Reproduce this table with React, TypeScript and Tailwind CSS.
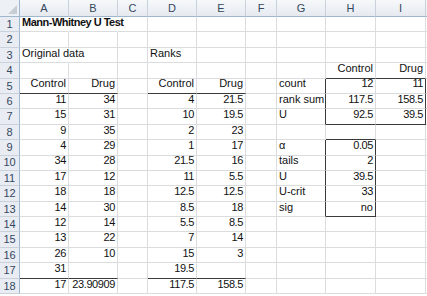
import React from "react";

type Cell = { v: string; left?: boolean; bold?: boolean; spill?: boolean };

const COLS = ["A", "B", "C", "D", "E", "F", "G", "H", "I"];

// row -> [A..I]
const DATA: Record<number, (string | Cell)[]> = {
  1: [{ v: "Mann-Whitney U Test", left: true, bold: true, spill: true }],
  3: [{ v: "Original data", left: true, spill: true }, "", "", { v: "Ranks", left: true }],
  4: ["", "", "", "", "", "", "", "Control", "Drug"],
  5: ["Control", "Drug", "", "Control", "Drug", "", { v: "count", left: true }, "12", "11"],
  6: ["11", "34", "", "4", "21.5", "", { v: "rank sum", left: true }, "117.5", "158.5"],
  7: ["15", "31", "", "10", "19.5", "", { v: "U", left: true }, "92.5", "39.5"],
  8: ["9", "35", "", "2", "23"],
  9: ["4", "29", "", "1", "17", "", { v: "α", left: true }, "0.05"],
  10: ["34", "28", "", "21.5", "16", "", { v: "tails", left: true }, "2"],
  11: ["17", "12", "", "11", "5.5", "", { v: "U", left: true }, "39.5"],
  12: ["18", "18", "", "12.5", "12.5", "", { v: "U-crit", left: true }, "33"],
  13: ["14", "30", "", "8.5", "18", "", { v: "sig", left: true }, "no"],
  14: ["12", "14", "", "5.5", "8.5"],
  15: ["13", "22", "", "7", "14"],
  16: ["26", "10", "", "15", "3"],
  17: ["31", "", "", "19.5", ""],
  18: ["17", "23.90909", "", "117.5", "158.5"],
};

const darkBottom = new Set([
  "A5", "B5", "D5", "E5", "A17", "B17", "D17", "E17",
  "H4", "I4", "H7", "I7", "H8", "H13",
]);
const darkRight = new Set([
  "G5", "G6", "G7", "I5", "I6", "I7",
  "G9", "G10", "G11", "G12", "G13",
  "H9", "H10", "H11", "H12", "H13",
]);
const noRight = new Set(["A1", "B1", "A3"]);

function getCell(r: number, c: number): Cell {
  const row = DATA[r] || [];
  const x = row[c];
  if (x === undefined) return { v: "" };
  if (typeof x === "string") return { v: x };
  return x;
}

const App = () => {
  const rows = Array.from({ length: 18 }, (_, i) => i + 1);
  return (
    <div
      className="w-[427px] h-[296px] overflow-hidden bg-white text-[11px] text-[#111]"
      style={{ fontFamily: '"Liberation Sans", Arial, sans-serif' }}
    >
      <div className="grid grid-cols-[20px_49px_49px_30px_49px_49px_31px_49px_50px_50px_1fr] grid-rows-[17px_repeat(18,15.4px)]">
        {/* corner */}
        <div className="relative bg-[#edf0f4] border-r border-b border-[#9eb6ce]">
          <div className="absolute right-[2px] bottom-[2px] w-0 h-0 border-l-[9px] border-l-transparent border-b-[9px] border-b-[#c7cdd4]" />
        </div>
        {COLS.map((c) => (
          <div
            key={c}
            className="flex items-center justify-center bg-gradient-to-b from-[#f6f8fa] to-[#e6eaf0] border-r border-b border-r-[#c9d1db] border-b-[#9eb6ce] text-[#34485f] text-[11px]"
          >
            {c}
          </div>
        ))}
        <div className="bg-gradient-to-b from-[#f6f8fa] to-[#e6eaf0] border-b border-[#9eb6ce]" />

        {rows.map((r) => (
          <React.Fragment key={r}>
            <div className="flex items-center justify-center bg-[#e9edf3] border-r border-b border-r-[#9eb6ce] border-b-[#c9d1db] text-[#34485f] text-[11px]">
              {r}
            </div>
            {COLS.map((c, ci) => {
              const id = `${c}${r}`;
              const cell = getCell(r, ci);
              const numeric = /^[0-9.]+$/.test(cell.v);
              const bottom = darkBottom.has(id) ? "border-b-[#3a3a3a]" : "border-b-[#dadcdd]";
              const right = darkRight.has(id)
                ? "border-r-[#3a3a3a]"
                : noRight.has(id)
                ? "border-r-transparent"
                : "border-r-[#dadcdd]";
              return (
                <div
                  key={id}
                  className={`relative flex items-end pb-[1px] border-r border-b whitespace-nowrap ${bottom} ${right} ${
                    cell.left ? "justify-start pl-[2px]" : "justify-end pr-[2px]"
                  } ${cell.spill ? "overflow-visible z-10" : "overflow-hidden"} ${
                    cell.bold ? "font-bold tracking-[-0.5px]" : ""
                  } ${numeric ? "tracking-[-0.4px]" : ""}`}
                >
                  {cell.v}
                </div>
              );
            })}
            <div className="border-b border-[#dadcdd]" />
          </React.Fragment>
        ))}
      </div>
    </div>
  );
};

export default App;
